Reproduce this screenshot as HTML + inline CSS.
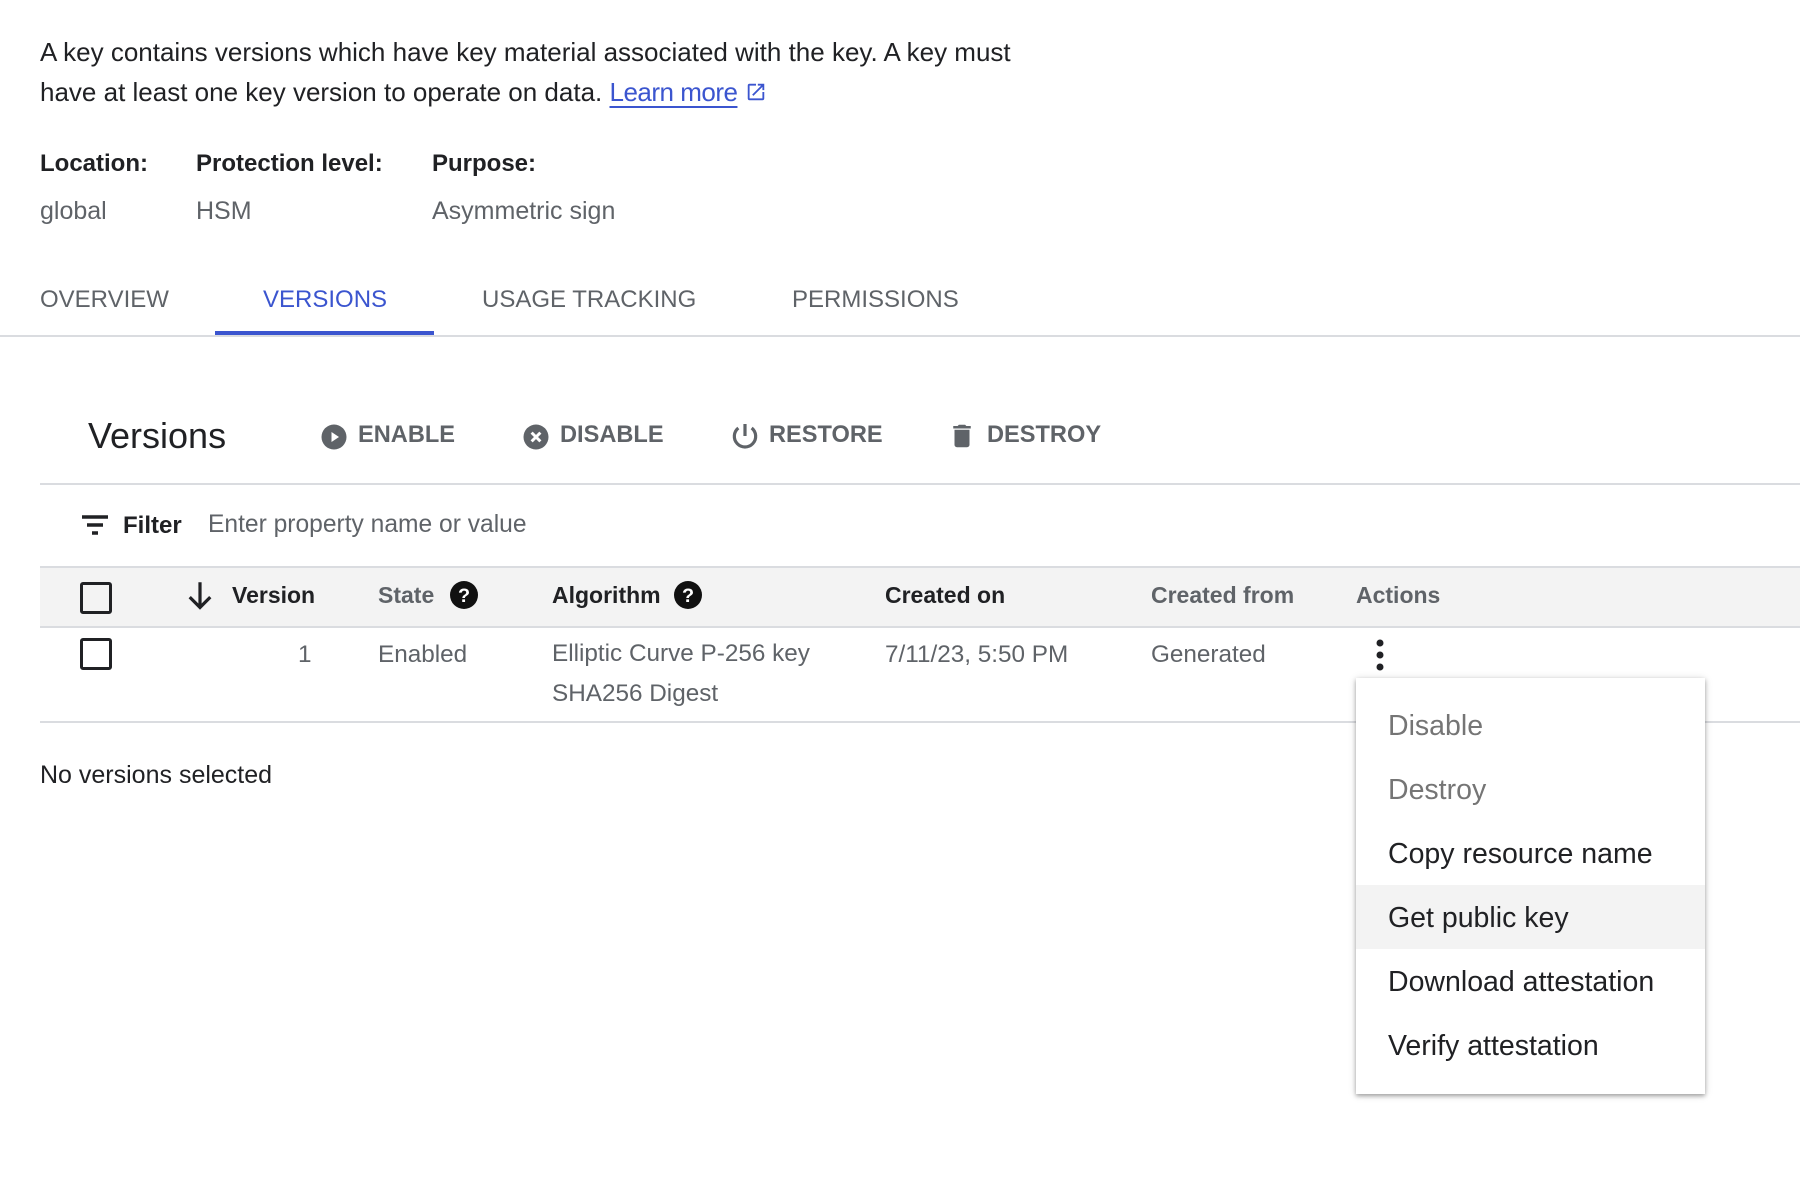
<!DOCTYPE html>
<html><head><meta charset="utf-8"><style>
body{margin:0;width:1800px;height:1192px;background:#fff;font-family:"Liberation Sans",Arial,sans-serif;color:#202124;position:relative;overflow:hidden}
.a{position:absolute;white-space:nowrap;line-height:1}
.g{color:#5f6368}
.b{font-weight:bold}
.hr{position:absolute;height:2px;background:#dadce0}
.cb{position:absolute;width:26px;height:26px;border:3px solid #202124;border-radius:3px}
.tab{font-size:24px;color:#5f6368;top:288px}
.btn{font-size:23.6px;color:#5f6368;font-weight:bold;top:424px}
.mi{position:absolute;left:1388px;font-size:28.5px;line-height:1}
</style></head><body>
<div class="a" style="left:40px;top:32px;font-size:26px;line-height:40px">A key contains versions which have key material associated with the key. A key must<br>have at least one key version to operate on data. <span style="color:#3b55cf;text-decoration:underline;text-underline-offset:5px;letter-spacing:-0.5px">Learn more</span> <svg width="22" height="22" viewBox="0 0 24 24" style="vertical-align:-2px"><path d="M19 19H5V5h7V3H5a2 2 0 0 0-2 2v14a2 2 0 0 0 2 2h14a2 2 0 0 0 2-2v-7h-2v7zM14 3v2h3.6l-9.8 9.8 1.4 1.4L19 6.4V10h2V3h-7z" fill="#3b55cf"/></svg></div>

<div class="a b" style="left:40px;top:152px;font-size:24px">Location:</div>
<div class="a b" style="left:196px;top:152px;font-size:24px">Protection level:</div>
<div class="a b" style="left:432px;top:152px;font-size:24px">Purpose:</div>
<div class="a g" style="left:40px;top:199px;font-size:25px">global</div>
<div class="a g" style="left:196px;top:199px;font-size:25px">HSM</div>
<div class="a g" style="left:432px;top:199px;font-size:25px">Asymmetric sign</div>

<div class="a tab" style="left:40px">OVERVIEW</div>
<div class="a tab" style="left:263px;color:#3b55cf">VERSIONS</div>
<div class="a tab" style="left:482px">USAGE TRACKING</div>
<div class="a tab" style="left:792px">PERMISSIONS</div>
<div style="position:absolute;left:215px;top:331px;width:219px;height:4px;background:#3b55cf"></div>
<div class="hr" style="left:0;top:335px;width:1800px"></div>

<div class="a" style="left:88px;top:418px;font-size:36px">Versions</div>
<svg class="a" style="left:319px;top:422px" width="30" height="30" viewBox="0 0 24 24"><circle cx="12" cy="12" r="10" fill="#5f6368"/><path d="M10 8l6 4-6 4z" fill="#fff"/></svg>
<div class="a btn" style="left:358px">ENABLE</div>
<svg class="a" style="left:521px;top:422px" width="30" height="30" viewBox="0 0 24 24"><circle cx="12" cy="12" r="10" fill="#5f6368"/><path d="M8.5 8.5l7 7M15.5 8.5l-7 7" stroke="#fff" stroke-width="2.4"/></svg>
<div class="a btn" style="left:560px">DISABLE</div>
<svg class="a" style="left:729px;top:420px" width="32" height="32" viewBox="0 0 24 24"><path d="M12 3v9M7 6a8 8 0 1 0 10 0" fill="none" stroke="#5f6368" stroke-width="2.4"/></svg>
<div class="a btn" style="left:769px">RESTORE</div>
<svg class="a" style="left:947px;top:420px" width="30" height="32" viewBox="0 0 24 24"><path d="M6 19a2 2 0 0 0 2 2h8a2 2 0 0 0 2-2V7H6v12zM19 4h-3.5l-1-1h-5l-1 1H5v2h14V4z" fill="#5f6368"/></svg>
<div class="a btn" style="left:987px">DESTROY</div>
<div class="hr" style="left:40px;top:483px;width:1760px"></div>

<svg class="a" style="left:80px;top:512px" width="30" height="28" viewBox="0 0 30 28"><path d="M2 5h26M7 13h16M12 21h6" stroke="#202124" stroke-width="3.5"/></svg>
<div class="a b" style="left:123px;top:514px;font-size:24px">Filter</div>
<div class="a g" style="left:208px;top:513px;font-size:24.6px">Enter property name or value</div>

<div style="position:absolute;left:40px;top:566px;width:1760px;height:58px;background:#f3f3f3;border-top:2px solid #dadce0;border-bottom:2px solid #dadce0"></div>
<div class="cb" style="left:80px;top:582px"></div>
<svg class="a" style="left:186px;top:580px" width="28" height="32" viewBox="0 0 24 28"><path d="M12 2v22M3 15l9 9 9-9" fill="none" stroke="#202124" stroke-width="2.8"/></svg>
<div class="a b" style="left:232px;top:584px;font-size:23px">Version</div>
<div class="a b g" style="left:378px;top:584px;font-size:23px">State</div>
<svg class="a" style="left:450px;top:581px" width="28" height="28" viewBox="0 0 24 24"><circle cx="12" cy="12" r="12" fill="#111"/><text x="12" y="18" text-anchor="middle" font-family="Liberation Sans" font-weight="bold" font-size="17" fill="#fff">?</text></svg>
<div class="a b" style="left:552px;top:584px;font-size:23px">Algorithm</div>
<svg class="a" style="left:674px;top:581px" width="28" height="28" viewBox="0 0 24 24"><circle cx="12" cy="12" r="12" fill="#111"/><text x="12" y="18" text-anchor="middle" font-family="Liberation Sans" font-weight="bold" font-size="17" fill="#fff">?</text></svg>
<div class="a b" style="left:885px;top:584px;font-size:23px">Created on</div>
<div class="a b g" style="left:1151px;top:584px;font-size:23px">Created from</div>
<div class="a b g" style="left:1356px;top:584px;font-size:23px">Actions</div>

<div class="cb" style="left:80px;top:638px"></div>
<div class="a g" style="left:298px;top:643px;font-size:24.3px">1</div>
<div class="a g" style="left:378px;top:643px;font-size:24.3px">Enabled</div>
<div class="a g" style="left:552px;font-size:24.3px;line-height:40px;top:634px">Elliptic Curve P-256 key<br>SHA256 Digest</div>
<div class="a g" style="left:885px;top:643px;font-size:24.3px">7/11/23, 5:50 PM</div>
<div class="a g" style="left:1151px;top:643px;font-size:24.3px">Generated</div>
<svg class="a" style="left:1372px;top:638px" width="16" height="34" viewBox="0 0 16 34"><circle cx="8" cy="5" r="3.5" fill="#202124"/><circle cx="8" cy="17" r="3.5" fill="#202124"/><circle cx="8" cy="29" r="3.5" fill="#202124"/></svg>
<div class="hr" style="left:40px;top:721px;width:1760px"></div>

<div class="a" style="left:40px;top:763px;font-size:25px">No versions selected</div>

<div style="position:absolute;left:1356px;top:678px;width:349px;height:416px;background:#fff;box-shadow:0 2px 4px rgba(0,0,0,.3),0 1px 8px rgba(0,0,0,.15)"></div>
<div style="position:absolute;left:1356px;top:885px;width:349px;height:64px;background:#f3f3f3"></div>
<div class="mi" style="top:712px;color:#757575">Disable</div>
<div class="mi" style="top:776px;color:#757575">Destroy</div>
<div class="mi" style="top:840px">Copy resource name</div>
<div class="mi" style="top:904px">Get public key</div>
<div class="mi" style="top:968px">Download attestation</div>
<div class="mi" style="top:1032px">Verify attestation</div>
</body></html>
